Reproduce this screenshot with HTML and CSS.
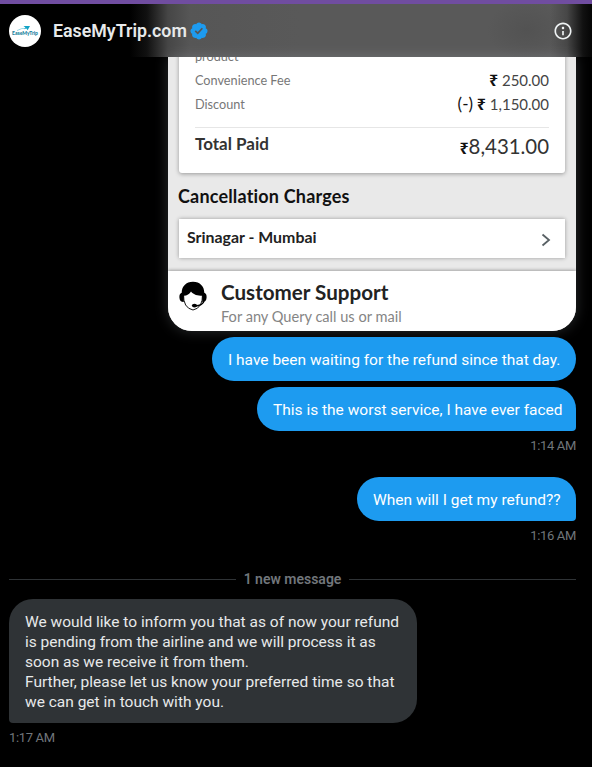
FILE: index.html
```
<!DOCTYPE html>
<html lang="en">
<head>
    <meta charset="UTF-8">
    <meta name="viewport" content="width=device-width, initial-scale=1.0">
    <title>EaseMyTrip.com</title>
    <link rel="stylesheet" href="styles.css">
</head>
<body>

<!-- Header -->
<header class="header">
    <svg class="avatar" viewBox="0 0 32 32">
        <circle cx="16" cy="16" r="16" fill="#fff"/>
        <path d="M14.5 11H21l-2.4 4.2-1.2-1.6-2.6.6 1.6-1.8z" fill="#12a3c6"/>
        <path d="M8 15.6q5-3 9-2.2" fill="none" stroke="#5bbdd4" stroke-width=".6"/>
        <text class="logo-text" x="3" y="19.8" textLength="26" lengthAdjust="spacingAndGlyphs">EaseMyTrip</text>
    </svg>
    <h1 class="name">EaseMyTrip.com</h1>
    <svg class="verified" viewBox="0 0 22 22">
        <path fill="#1d9bf0" d="M20.396 11c-.018-.646-.215-1.275-.57-1.816-.354-.54-.852-.972-1.438-1.246.223-.607.27-1.264.14-1.897-.131-.634-.437-1.218-.882-1.687-.47-.445-1.053-.75-1.687-.882-.633-.13-1.29-.083-1.897.14-.273-.587-.704-1.086-1.245-1.44S11.647 1.62 11 1.604c-.646.017-1.273.213-1.813.568s-.969.854-1.24 1.44c-.608-.223-1.267-.272-1.902-.14-.635.13-1.22.436-1.69.882-.445.47-.749 1.055-.878 1.688-.13.633-.08 1.29.144 1.896-.587.274-1.087.705-1.443 1.245-.356.54-.555 1.17-.574 1.817.02.647.218 1.276.574 1.817.356.54.856.972 1.443 1.245-.224.606-.274 1.263-.144 1.896.13.634.433 1.218.877 1.688.47.443 1.054.747 1.687.878.633.132 1.29.084 1.897-.136.274.586.705 1.084 1.246 1.439.54.354 1.17.551 1.816.569.647-.016 1.276-.213 1.817-.567s.972-.854 1.245-1.44c.604.239 1.266.296 1.903.164.636-.132 1.22-.447 1.68-.907.46-.46.776-1.044.908-1.681s.075-1.299-.165-1.903c.586-.274 1.084-.705 1.439-1.246.354-.54.551-1.17.569-1.816zM9.662 14.85l-3.429-3.428 1.293-1.302 2.072 2.072 4.4-4.794 1.347 1.246z"/>
    </svg>
    <svg class="info" viewBox="0 0 24 24">
        <path fill="#eff3f4" d="M13.5 8.5c0 .83-.67 1.5-1.5 1.5s-1.5-.67-1.5-1.5S11.17 7 12 7s1.5.67 1.5 1.5zM13 17v-5h-2v5h2zm-1 5.25c5.66 0 10.25-4.59 10.25-10.25S17.66 1.75 12 1.75 1.75 6.34 1.75 12 6.34 22.25 12 22.25zM20.25 12c0 4.56-3.69 8.25-8.25 8.25S3.75 16.56 3.75 12 7.44 3.75 12 3.75s8.25 3.69 8.25 8.25z"/>
    </svg>
</header>

<main class="chat">

    <!-- Shared booking screenshot -->
    <div class="attachment">
        <div class="fare">
            <div class="row product"><span>product</span></div>
            <div class="row"><span>Convenience Fee</span><span class="amount"><b>₹</b> 250.00</span></div>
            <div class="row"><span>Discount</span><span class="amount"><i>(-)</i> <b>₹</b> 1,150.00</span></div>
            <div class="total"><span>Total Paid</span><span class="sum"><b>₹</b>8,431.00</span></div>
        </div>
        <h2 class="charges">Cancellation Charges</h2>
        <div class="route">
            <span>Srinagar - Mumbai</span>
            <svg class="chevron" viewBox="0 0 10 14"><path d="M1.5 1.5L8 7l-6.500 5.500" fill="none" stroke="#586064" stroke-width="1.8"/></svg>
        </div>
        <div class="support">
            <svg class="agent" viewBox="0 0 28 30">
                <path d="M4.500 13Q4 27 14 29Q24 27 23.500 13" fill="#fff" stroke="#111" stroke-width="1"/>
                <path d="M14 .8C7 .8 2.700 5.500 2.700 11.800C.8 12.500.3 14 .4 16.500C.5 19.500 2 21 4.800 21V14.800C8 14.800 10.500 13 12 10.500C14.500 13.800 19 14.800 23.200 14.800V21C26 21 27.500 19.500 27.600 16.500C27.700 14 27.200 12.500 25.300 11.800C25.300 5.500 21 .8 14 .8Z" fill="#000"/>
                <path d="M25 20Q24 24.500 16 25" fill="none" stroke="#000" stroke-width="1.300"/>
                <ellipse cx="15.500" cy="24.600" rx="2.600" ry="1.900" fill="#000"/>
            </svg>
            <div>
                <h2 class="support-title">Customer Support</h2>
                <p class="support-text">For any Query call us or mail</p>
            </div>
        </div>
    </div>

    <!-- Messages -->
    <div class="message sent middle m1">I have been waiting for the refund since that day.</div>
    <div class="message sent m2">This is the worst service, I have ever faced</div>
    <time class="time right">1:14 AM</time>

    <div class="message sent m3">When will I get my refund??</div>
    <time class="time right">1:16 AM</time>

    <div class="divider"><span>1 new message</span></div>

    <div class="message received">We would like to inform you that as of now your refund<br>is pending from the airline and we will process it as<br>soon as we receive it from them.<br>Further, please let us know your preferred time so that<br>we can get in touch with you.</div>
    <time class="time">1:17 AM</time>
</main>

</body>
</html>
```

FILE: styles.css
```
* {
    box-sizing: border-box;
}
body {
    margin: 0;
    height: 767px;
    overflow: hidden;
    background-color: #000;
    color: #e7e9ea;
    font-family: Roboto, "Liberation Sans", sans-serif;
    font-size: 15.500px;
    line-height: 20px;
}
h1, h2, p {
    margin: 0;
}

/* header */
.header {
    display: flex;
    align-items: center;
    height: 57px;
    padding: 0 20px 0 9px;
    border-top: 4px solid #704da0;
    background: radial-gradient(ellipse 40px 30px at 527px 26px, rgba(70, 70, 70, 0.35), transparent), linear-gradient(to right, #000 130px, #111 147px, #464646 168px, #565656 190px, #595959 300px, #595959 550px, #474747 567px, #111 583px, #050505 592px);
}
.avatar {
    width: 32px;
    height: 32px;
}
.logo-text {
    font-family: Lato, sans-serif;
    font-size: 6px;
    font-weight: 900;
    fill: #167f9d;
}
.name {
    margin-left: 12px;
    width: 134px;
    font-size: 17.800px;
    font-weight: 600;
    line-height: 24px;
    white-space: nowrap;
}
.verified {
    width: 20px;
    height: 20px;
    margin-left: 2px;
    margin-top: 1px;
}
.info {
    width: 20px;
    height: 20px;
    margin-left: auto;
    margin-right: -1px;
}

/* chat column */
.chat {
    display: flex;
    flex-direction: column;
    align-items: flex-start;
    padding: 0 16px 0 9px;
}
.attachment {
    display: flex;
    flex-direction: column;
    justify-content: flex-end;
    align-self: flex-end;
    width: 408px;
    height: 274px;
    overflow: hidden;
    border-radius: 0 0 24px 24px;
    background-color: #e9e9e9;
    box-shadow: 0 0 14px rgba(217, 225, 235, 0.2);
    color: #222;
    font-family: Lato, sans-serif;
    font-variant-ligatures: none;
}
.fare {
    margin: 0 11px;
    padding: 0 16px;
    height: 128px;
    flex-shrink: 0;
    background-color: #fff;
    border-radius: 0 0 3px 3px;
    box-shadow: 0 1px 4px rgba(0, 0, 0, 0.35);
}
.row {
    display: flex;
    justify-content: space-between;
    height: 24px;
    line-height: 24px;
    font-size: 12.700px;
    color: #777;
}
.product {
    margin-top: -1px;
}
.amount {
    font-size: 15px;
    color: #444;
    white-space: pre;
}
.amount b, .sum b {
    font-family: "Noto Sans", sans-serif;
    font-size: 16px;
    line-height: 1;
    color: #111;
}
.amount i {
    font-style: normal;
    font-size: 17px;
    line-height: 1;
    color: #111;
}
.total {
    display: flex;
    justify-content: space-between;
    margin-top: 11px;
    padding-top: 4px;
    border-top: 1px solid #e6e6e6;
    font-size: 17px;
    font-weight: 700;
    line-height: 24px;
    color: #333;
}
.sum {
    padding-top: 2px;
    font-size: 20.400px;
    font-weight: 400;
}
.charges {
    padding: 10px 10px;
    font-size: 18px;
    letter-spacing: 0.18px;
    line-height: 26px;
    color: #111;
}
.route {
    display: flex;
    flex-shrink: 0;
    align-items: center;
    justify-content: space-between;
    height: 39px;
    margin: 0 11px 13px;
    padding: 0 14px 4px 8px;
    background-color: #fff;
    box-shadow: 0 0 4px rgba(0, 0, 0, 0.35);
    font-size: 15.900px;
    font-weight: 700;
}
.chevron {
    width: 10px;
    height: 14px;
    margin-top: 6px;
}
.support {
    display: flex;
    flex-shrink: 0;
    height: 60px;
    padding: 9px 11px 0;
    background-color: #fff;
    box-shadow: 0 -1px 3px rgba(0, 0, 0, 0.3);
}
.agent {
    width: 28px;
    height: 30px;
    margin-top: 1px;
    margin-right: 14px;
}
.support-title {
    margin-top: -1px;
    font-size: 20.600px;
    line-height: 26px;
}
.support-text {
    font-size: 14.600px;
    line-height: 24px;
    color: #858585;
}

/* bubbles */
.message {
    padding: 13px 16px 11px;
    border-radius: 22px;
    white-space: nowrap;
}
.sent {
    align-self: flex-end;
    margin-top: 6px;
    background-color: #1d9bf0;
    color: #fff;
    border-bottom-right-radius: 4px;
}
.middle {
    border-bottom-right-radius: 22px;
}
.m1 {
    width: 364px;
}
.m2 {
    width: 319px;
}
.m3 {
    width: 219px;
    margin-top: 22px;
}
.received {
    width: 408px;
    height: 124px;
    background-color: #2f3336;
    border-radius: 24px 24px 24px 4px;
}
.time {
    margin-top: 6px;
    font-size: 13px;
    letter-spacing: -0.35px;
    line-height: 18px;
    color: #71767b;
}
.right {
    align-self: flex-end;
}
.divider {
    display: flex;
    align-items: center;
    align-self: stretch;
    margin: 24px 0 10px;
    font-size: 14px;
    font-weight: 600;
    line-height: 20px;
    color: #71767b;
}
.divider::before, .divider::after {
    content: "";
    flex: 1;
    height: 1px;
    background-color: #2f3336;
}
.divider span {
    padding: 0 8px;
}
```
